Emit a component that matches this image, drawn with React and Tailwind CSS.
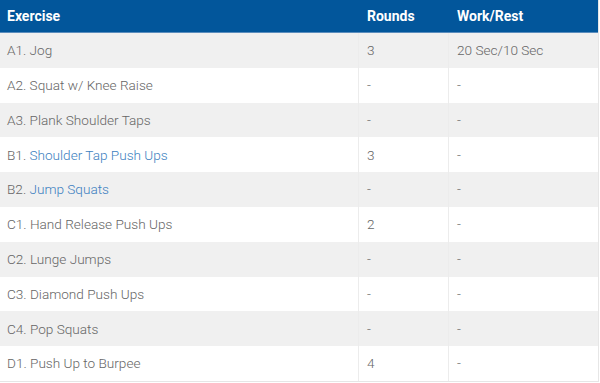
import React from "react";

const rows = [
  { code: "A1.", name: "Jog", link: false, rounds: "3", wr: "20 Sec/10 Sec" },
  { code: "A2.", name: "Squat w/ Knee Raise", link: false, rounds: "-", wr: "-" },
  { code: "A3.", name: "Plank Shoulder Taps", link: false, rounds: "-", wr: "-" },
  { code: "B1.", name: "Shoulder Tap Push Ups", link: true, rounds: "3", wr: "-" },
  { code: "B2.", name: "Jump Squats", link: true, rounds: "-", wr: "-" },
  { code: "C1.", name: "Hand Release Push Ups", link: false, rounds: "2", wr: "-" },
  { code: "C2.", name: "Lunge Jumps", link: false, rounds: "-", wr: "-" },
  { code: "C3.", name: "Diamond Push Ups", link: false, rounds: "-", wr: "-" },
  { code: "C4.", name: "Pop Squats", link: false, rounds: "-", wr: "-" },
  { code: "D1.", name: "Push Up to Burpee", link: false, rounds: "4", wr: "-" },
];

export default function App() {
  return (
    <div className="w-[600px] h-[383px] bg-white overflow-hidden" style={{ fontFamily: "Roboto, 'Liberation Sans', sans-serif" }}>
      <div className="w-[599px] border-r border-[#e6e6e6] border-b">
        <div className="grid grid-cols-[359px_90px_1fr] h-[33px] bg-[#02569b] border-b border-[#5b8dbd] text-white font-bold text-[14px]">
          <div className="flex items-center pl-[7px]">Exercise</div>
          <div className="flex items-center pl-[8px]">Rounds</div>
          <div className="flex items-center pl-[8px]">Work/Rest</div>
        </div>
        {rows.map((r, i) => (
          <div
            key={i}
            className={`grid grid-cols-[359px_90px_1fr] h-[34.8px] text-[13.6px] font-light text-[#666666] ${i % 2 === 0 ? "bg-[#f0f0f0]" : "bg-white"}`}
          >
            <div className="flex items-center pl-[7px] border-r border-[#ececec]">
              <span>{r.code}&nbsp;</span>
              <span className={r.link ? "text-[#3c7fc0]" : ""}>{r.name}</span>
            </div>
            <div className="flex items-center pl-[8px] border-r border-[#ececec]">{r.rounds}</div>
            <div className="flex items-center pl-[8px]">{r.wr}</div>
          </div>
        ))}
      </div>
    </div>
  );
}
